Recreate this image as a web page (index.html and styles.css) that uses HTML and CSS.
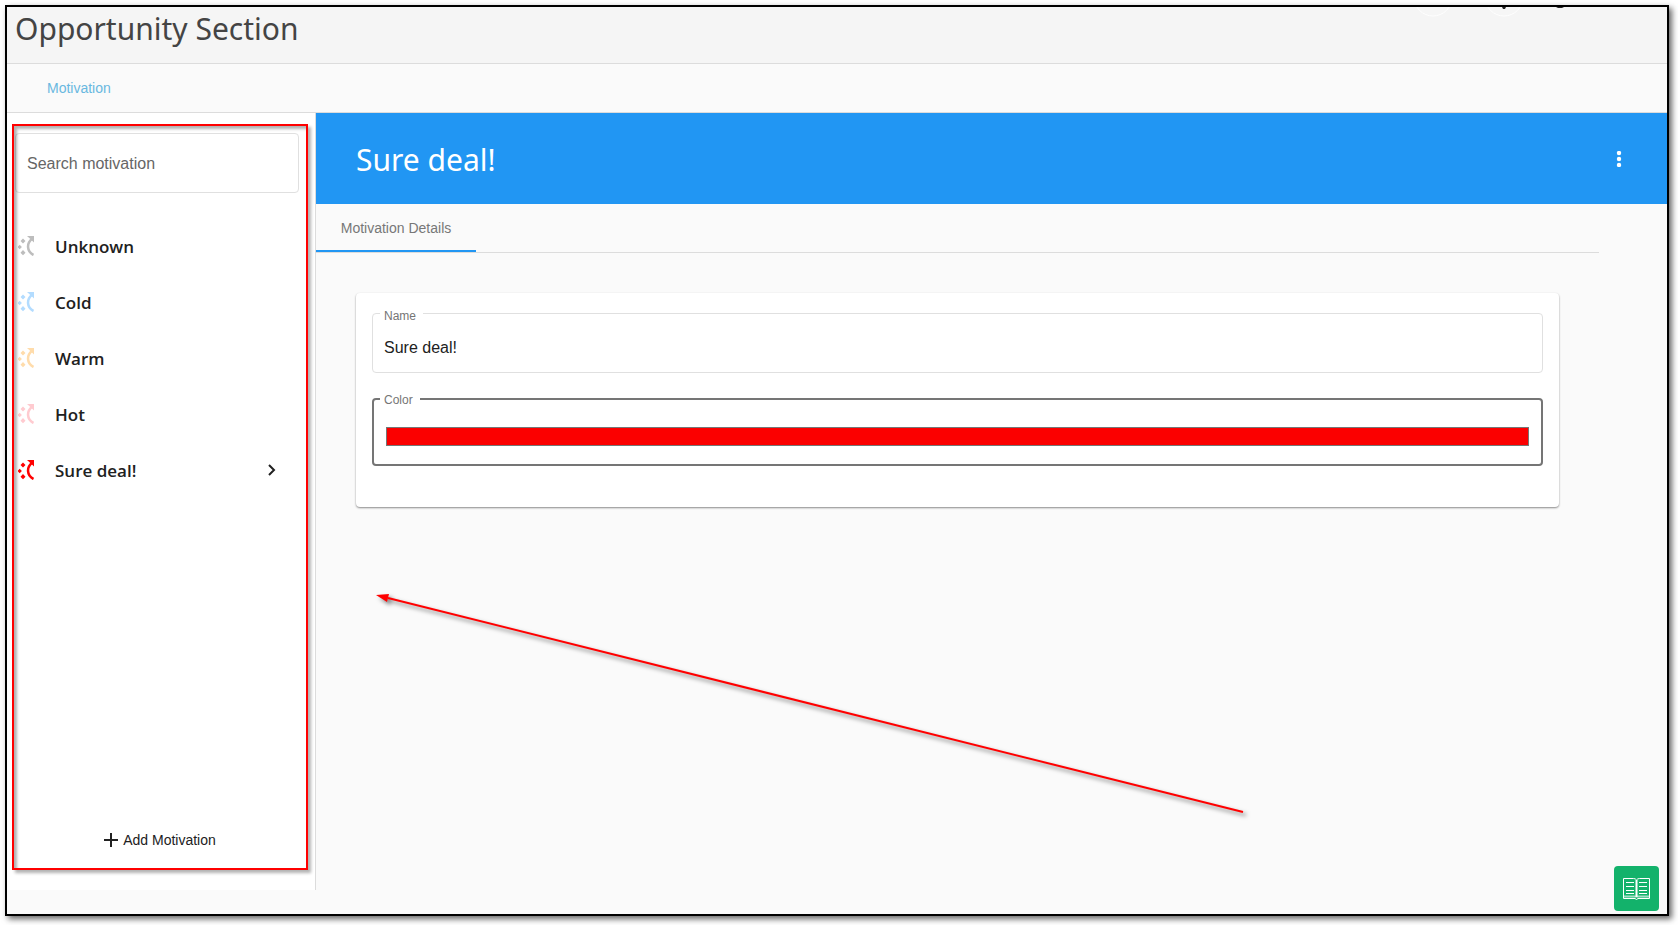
FILE: index.html
```html
<!DOCTYPE html>
<html lang="en">
<head>
    <meta charset="UTF-8">
    <meta name="viewport" content="width=device-width, initial-scale=1.0">
    <title>Opportunity Section</title>
    <link rel="stylesheet" href="styles.css">
</head>
<body>
    <svg width="0" height="0" class="sprite" aria-hidden="true">
        <symbol id="motivation" viewBox="0 0 16 20">
            <path d="M5 2.4l2.5 2.6L5 7.6 2.5 5zM1.7 8.8L3.9 11l-2.2 2.2L-.5 11zM5 14.1l2.5 2.6L5 19.3l-2.5-2.6zM9 0h7v6.500l-2.300-2.300z" fill="currentColor"/>
            <path d="M15.500 19C8.500 15.500 8.500 7 14 3" fill="none" stroke="currentColor" stroke-width="2.500"/>
        </symbol>
    </svg>

    <div class="frame">
        <header class="page-header">
            <h1>Opportunity Section</h1>
            <svg class="header-icons" width="160" height="10" viewBox="0 0 160 10" aria-hidden="true">
                <circle cx="23" cy="-10" r="19" fill="#f6f6f6" stroke="#fff"/>
                <circle cx="94" cy="-10" r="19" fill="#f6f6f6" stroke="#fff"/>
                <path d="M92 0h4l-1 2h-2zM146 0h8l-2 1h-4z" fill="#222"/>
            </svg>
        </header>

        <nav class="section-nav">
            <a href="#motivation-list">Motivation</a>
        </nav>

        <div class="workspace">
            <aside class="sidebar" id="motivation-list">
                <input type="search" class="search" placeholder="Search motivation" aria-label="Search motivation">
                <ul class="list">
                    <li><button class="item"><svg class="item-icon unknown"><use href="#motivation"/></svg>Unknown</button></li>
                    <li><button class="item"><svg class="item-icon cold"><use href="#motivation"/></svg>Cold</button></li>
                    <li><button class="item"><svg class="item-icon warm"><use href="#motivation"/></svg>Warm</button></li>
                    <li><button class="item"><svg class="item-icon hot"><use href="#motivation"/></svg>Hot</button></li>
                    <li>
                        <button class="item" aria-current="true">
                            <svg class="item-icon sure"><use href="#motivation"/></svg>Sure deal!
                            <svg class="chevron" width="8" height="12" viewBox="0 0 8 12"><path d="M1 1l5 5-5 5" fill="none" stroke="currentColor" stroke-width="2"/></svg>
                        </button>
                    </li>
                </ul>
                <button class="add">
                    <svg width="14" height="14" viewBox="0 0 14 14"><path d="M0 7h14M7 0v14" stroke="currentColor" stroke-width="2"/></svg>
                    Add Motivation
                </button>
                <div class="highlight"></div>
            </aside>

            <main class="details">
                <div class="banner">
                    <h2>Sure deal!</h2>
                    <button class="more" aria-label="More options">
                        <svg width="6" height="16" viewBox="0 0 6 16"><g fill="#fff"><circle cx="3" cy="2" r="2.200"/><circle cx="3" cy="8" r="2.200"/><circle cx="3" cy="14" r="2.200"/></g></svg>
                    </button>
                </div>
                <div class="tabs">
                    <button class="tab">Motivation Details</button>
                </div>
                <form class="card">
                    <div class="field">
                        <label for="name">Name</label>
                        <input type="text" id="name" value="Sure deal!">
                    </div>
                    <div class="field focused">
                        <label for="color">Color</label>
                        <input type="color" id="color" value="#fb0000">
                    </div>
                </form>
                <svg class="arrow" width="880" height="230" viewBox="0 0 880 230" aria-hidden="true">
                    <path d="M12 3L867 217" stroke="#f00" stroke-width="2"/>
                    <path d="M0 0l13-1-2 8z" fill="#f00"/>
                </svg>
            </main>
        </div>

        <button class="guide" aria-label="Guide">
            <svg width="27" height="23" viewBox="0 0 27 23" fill="none" stroke="#fff">
                <path d="M.5 1.500h10q2 0 3 1.500 1-1.500 3-1.500h10v20H15l-1.500 1-1.500-1H.5z"/>
                <path d="M13.500 3v17" stroke-width="2"/>
                <path d="M3 5.500h8M3 9.500h8M3 13.500h8M3 16.500h8M16 5.500h8M16 9.500h8M16 13.500h8M16 16.500h8"/>
                <path d="M1 19.500h25" stroke-width="2" opacity=".6"/>
            </svg>
        </button>
    </div>
</body>
</html>
```
FILE: styles.css
```css
* { box-sizing: border-box; }
body { margin: 0; padding: 5px 9px 9px 5px; min-height: 100vh; display: flex; background: white; color: #212121; font-family: "Liberation Sans", Arial, sans-serif; font-size: 14px; }
h1, h2 { margin: 0; font-family: "Segoe UI", "Noto Sans", sans-serif; font-weight: 400; }
button { padding: 0; border: none; background: none; color: inherit; font: inherit; cursor: pointer; }
input { font: inherit; color: inherit; }
.sprite { position: absolute; }

.frame { position: relative; flex: 1; display: flex; flex-direction: column; border: 2px solid black; background: #fafafa; box-shadow: 3px 3px 6px rgba(0, 0, 0, 0.6); }

.page-header { position: relative; height: 57px; padding-left: 8px; background: #f5f5f5; border-bottom: 1px solid #dcdcdc; overflow: hidden; }
.page-header h1 { font-size: 30px; line-height: 44px; color: #444; }
.header-icons { position: absolute; top: 0; right: 97px; }

.section-nav { display: flex; align-items: center; height: 49px; padding-left: 40px; border-bottom: 1px solid #dcdcdc; }
.section-nav a { color: #69b8e0; text-decoration: none; }

.workspace { flex: 1; display: flex; }

/* sidebar */
.sidebar { position: relative; display: flex; flex-direction: column; width: 309px; margin-bottom: 24px; padding: 20px 16px 39px 8px; background: white; border-right: 1px solid #dcdcdc; }
.search { height: 60px; padding: 2px 11px 0; border: 1px solid #e0e0e0; border-radius: 4px; background: white; font-size: 16px; }
.search::placeholder { color: #666; }
.list { flex: 1; margin: 25px 0 0; padding: 0; list-style: none; }
.item { display: flex; align-items: center; width: 100%; height: 56px; padding: 0 23px 0 3px; font-family: "Segoe UI", "Open Sans", sans-serif; font-size: 17px; font-weight: 600; }
.item-icon { width: 16px; height: 20px; margin-right: 21px; }
.unknown { color: #bdbdbd; }
.cold { color: #b3dcff; }
.warm { color: #ffdcab; }
.hot { color: #ffcbd0; }
.sure { color: #f00; }
.chevron { margin-left: auto; }
.add { display: flex; align-items: center; justify-content: center; gap: 5px; height: 22px; padding-left: 6px; }
.highlight { position: absolute; inset: 11px 7px 20px 5px; border: 2px solid #f00; box-shadow: 3px 3px 3px rgba(0, 0, 0, 0.3), inset 3px 3px 3px rgba(0, 0, 0, 0.3); pointer-events: none; }

/* details */
.details { position: relative; flex: 1; min-width: 0; }
.banner { display: flex; align-items: center; justify-content: space-between; height: 91px; padding: 0 38px 0 40px; background: #2196f3; color: white; }
.banner h2 { padding-top: 2px; font-size: 30px; }
.more { display: flex; justify-content: center; width: 20px; }
.tabs { display: flex; height: 49px; margin-right: 68px; border-bottom: 1px solid #dcdcdc; }
.tab { width: 160px; padding-top: 2px; border-bottom: 2px solid #2196f3; color: #777; }
.card { display: flex; flex-direction: column; gap: 25px; margin: 40px 108px 0 40px; padding: 20px 16px 41px; background: white; border-radius: 4px; box-shadow: 0 1px 2px rgba(0, 0, 0, 0.45); }
.field { position: relative; display: flex; align-items: center; height: 60px; padding: 0 11px; border: 1px solid #e0e0e0; border-radius: 4px; }
.field label { position: absolute; top: -6px; left: 7px; padding: 0 7px 0 4px; background: white; color: #757575; font-size: 12px; line-height: 16px; }
.field input { width: 100%; padding: 0; border: none; outline: none; background: none; }
.field input[type="text"] { padding-top: 10px; font-size: 16px; }
.field input[type="color"] { height: 19px; margin-top: 9px; }
.focused { height: 68px; padding: 0 12px; border: 2px solid #757575; }
.focused label { top: -8px; left: 6px; }
input::-webkit-color-swatch-wrapper { padding: 0; }
input::-webkit-color-swatch { border: 1px solid #767676; border-radius: 0; }

.arrow { position: absolute; top: 482px; left: 60px; overflow: visible; filter: drop-shadow(3px 3px 2px rgba(0, 0, 0, 0.5)); pointer-events: none; }
.guide { position: absolute; right: 8px; bottom: 3px; display: flex; align-items: center; justify-content: center; width: 45px; height: 45px; border-radius: 4px; background: #13b26b; }
```
